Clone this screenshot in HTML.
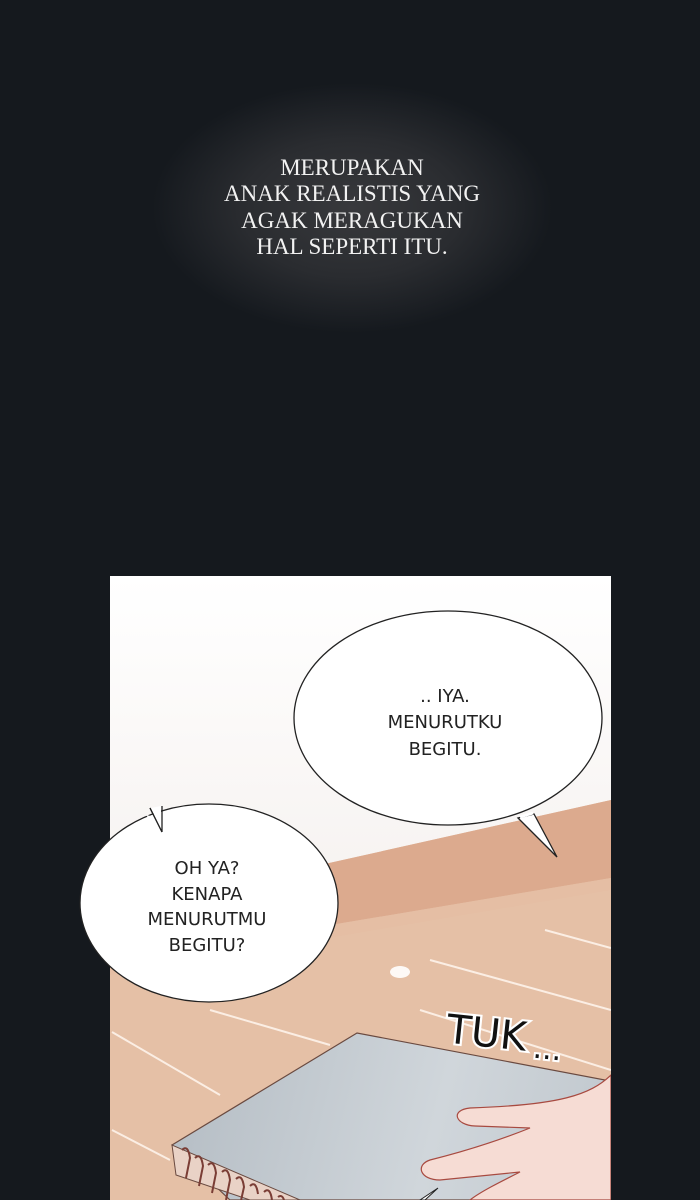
<!DOCTYPE html>
<html><head><meta charset="utf-8"><style>
html,body{margin:0;padding:0;background:#15191e;width:700px;height:1200px;overflow:hidden}
</style></head><body>
<svg width="700" height="1200" viewBox="0 0 700 1200" xmlns="http://www.w3.org/2000/svg" style="display:block">
<defs>
<radialGradient id="glow" cx="352" cy="208" r="1" gradientUnits="userSpaceOnUse" gradientTransform="translate(352 208) scale(200 125) translate(-352 -208)">
<stop offset="0" stop-color="#38393c"/><stop offset="0.55" stop-color="#2a2c30"/><stop offset="1" stop-color="#15191e"/>
</radialGradient>
<linearGradient id="wall" x1="0" y1="576" x2="0" y2="900" gradientUnits="userSpaceOnUse">
<stop offset="0" stop-color="#ffffff"/><stop offset="1" stop-color="#f6f2f0"/>
</linearGradient>
<linearGradient id="nb" x1="200" y1="1050" x2="600" y2="1150" gradientUnits="userSpaceOnUse">
<stop offset="0" stop-color="#b7bfc6"/><stop offset="0.6" stop-color="#d0d6db"/><stop offset="1" stop-color="#c2c9cf"/>
</linearGradient>
</defs>
<rect width="700" height="1200" fill="#15191e"/>
<ellipse cx="352" cy="208" rx="210" ry="130" fill="url(#glow)"/>
<g font-family="'Liberation Serif',serif" font-size="23" fill="#f2f2f2" text-anchor="middle">
<text x="352" y="175">MERUPAKAN</text>
<text x="352" y="201">ANAK REALISTIS YANG</text>
<text x="352" y="228">AGAK MERAGUKAN</text>
<text x="352" y="254">HAL SEPERTI ITU.</text>
</g>
<svg x="110" y="576" width="501" height="624" viewBox="110 576 501 624">
<rect x="110" y="576" width="501" height="624" fill="url(#wall)"/>
<polygon points="110,912 611,800 611,1200 110,1200" fill="#e5c0a6"/>
<polygon points="110,912 611,800 611,878 110,962" fill="#dcaa8e"/>
<polygon points="110,962 611,878 611,890 110,975" fill="#e5bea4"/>
<g stroke="#fbeee4" stroke-width="2" fill="none">
<line x1="420" y1="1010" x2="611" y2="1070"/>
<line x1="430" y1="960" x2="611" y2="1010"/>
<line x1="545" y1="930" x2="611" y2="948"/>
<line x1="210" y1="1010" x2="330" y2="1045"/>
<line x1="112" y1="1032" x2="220" y2="1095"/>
<line x1="112" y1="1130" x2="170" y2="1160"/>
</g>
<ellipse cx="400" cy="972" rx="10" ry="6" fill="#fff" opacity="0.9"/>
<polygon points="172,1145 357,1033 605,1080 640,1200 230,1200" fill="url(#nb)" stroke="#6a4a40" stroke-width="1.2"/>
<polygon points="172,1145 176,1175 250,1200 300,1200" fill="#e9d2c6" stroke="#6a4a40" stroke-width="1"/>
<g stroke="#7a3d35" stroke-width="2" fill="none">
<path d="M182,1150 q6,-6 8,8 l-4,20"/><path d="M195,1158 q6,-6 8,8 l-4,20"/><path d="M208,1165 q6,-6 8,8 l-4,20"/><path d="M222,1172 q6,-6 8,8 l-4,20"/><path d="M236,1179 q6,-6 8,8 l-4,18"/><path d="M250,1186 q6,-6 8,8"/><path d="M264,1192 q6,-6 8,8"/><path d="M278,1197 q4,-3 6,3"/>
</g>
<path d="M611,1075 C590,1095 560,1105 470,1108 C450,1110 455,1125 475,1126 L530,1128 C500,1140 470,1150 430,1160 C415,1165 420,1180 440,1180 L520,1172 C500,1182 480,1192 470,1200 L611,1200 Z" fill="#f6dcd4" stroke="#a84a40" stroke-width="1.2"/>
<polygon points="420,1200 438,1188 425,1200" fill="#fff" stroke="#222" stroke-width="1"/>
<g font-family="'DejaVu Sans','Liberation Sans',sans-serif" font-weight="normal" fill="#111" stroke="#fff" stroke-width="4" paint-order="stroke" transform="rotate(6 500 1030)">
<text x="447" y="1048" font-size="40" textLength="80" lengthAdjust="spacingAndGlyphs" font-family="'DejaVu Sans Condensed','DejaVu Sans',sans-serif" style="font-weight:200">TUK</text>
<text x="535" y="1054" font-size="30">...</text>
</g>
<ellipse cx="448" cy="718" rx="154" ry="107" fill="#fff" stroke="#222" stroke-width="1.3"/>
<polygon points="518,818 557,857 534,814" fill="#fff" stroke="#222" stroke-width="1.3"/>
<line x1="520" y1="817" x2="533" y2="813" stroke="#fff" stroke-width="3"/>
</svg>
<ellipse cx="209" cy="903" rx="129" ry="99" fill="#fff" stroke="#222" stroke-width="1.3"/>
<polygon points="146,815 162,834 182,815 160,818" fill="#fff"/>
<path d="M150,808 L162,832 M162,832 L162,806" fill="none" stroke="#222" stroke-width="1.3"/>
<polygon points="151,808 161,830 161,806" fill="#fff"/>
<path d="M150,808 L162,832" stroke="#222" stroke-width="1.3"/>
<g font-family="'DejaVu Sans','Liberation Sans',sans-serif" font-size="18" fill="#222" text-anchor="middle">
<text x="445" y="702">.. IYA.</text>
<text x="445" y="728">MENURUTKU</text>
<text x="445" y="755">BEGITU.</text>
<text x="207" y="874">OH YA?</text>
<text x="207" y="900">KENAPA</text>
<text x="207" y="925">MENURUTMU</text>
<text x="207" y="951">BEGITU?</text>
</g>
</svg>
</body></html>
